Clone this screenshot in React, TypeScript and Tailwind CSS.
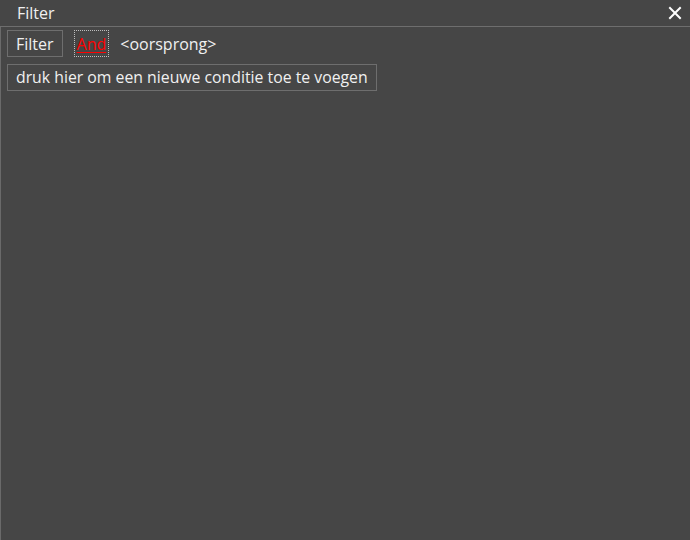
const App = () => {
  return (
    <div className="w-[690px] h-[540px] bg-[#464646] flex flex-col text-[#f0f0f0]" style={{ fontFamily: '"Open Sans", "Noto Sans", sans-serif' }}>
      {/* title bar */}
      <div className="h-[27px] flex items-center justify-between pl-[17px] pr-[8px] border-b border-[#6e6e6e]">
        <span className="text-[16px] leading-none">Filter</span>
        <svg width="14" height="14" viewBox="0 0 14 14" className="mt-[-1px]">
          <path d="M2 2L12 12M12 2L2 12" stroke="#ffffff" strokeWidth="2" strokeLinecap="square" />
        </svg>
      </div>

      <div className="flex-1 border-l border-[#6a6a6a] pl-[6px] pt-[3px] flex flex-col gap-[7px]">
        <div className="flex items-center">
          <button className="h-[27px] px-[8px] border border-[#6e6e6e] text-[16px] leading-none">Filter</button>
          <button className="ml-[11px] h-[27px] px-[2px] border border-dotted border-[#bdbdbd] text-[16px] leading-[20px] text-[#ff0000]">
            <span className="underline decoration-[#ff0000] decoration-1 underline-offset-[2px]">And</span>
          </button>
          <span className="ml-[11px] text-[16px] leading-none">&lt;oorsprong&gt;</span>
        </div>
        <div className="flex">
          <button className="h-[27px] px-[8px] border border-[#6e6e6e] text-[15.8px] leading-none">druk hier om een nieuwe conditie toe te voegen</button>
        </div>
      </div>
    </div>
  );
};

export default App;
